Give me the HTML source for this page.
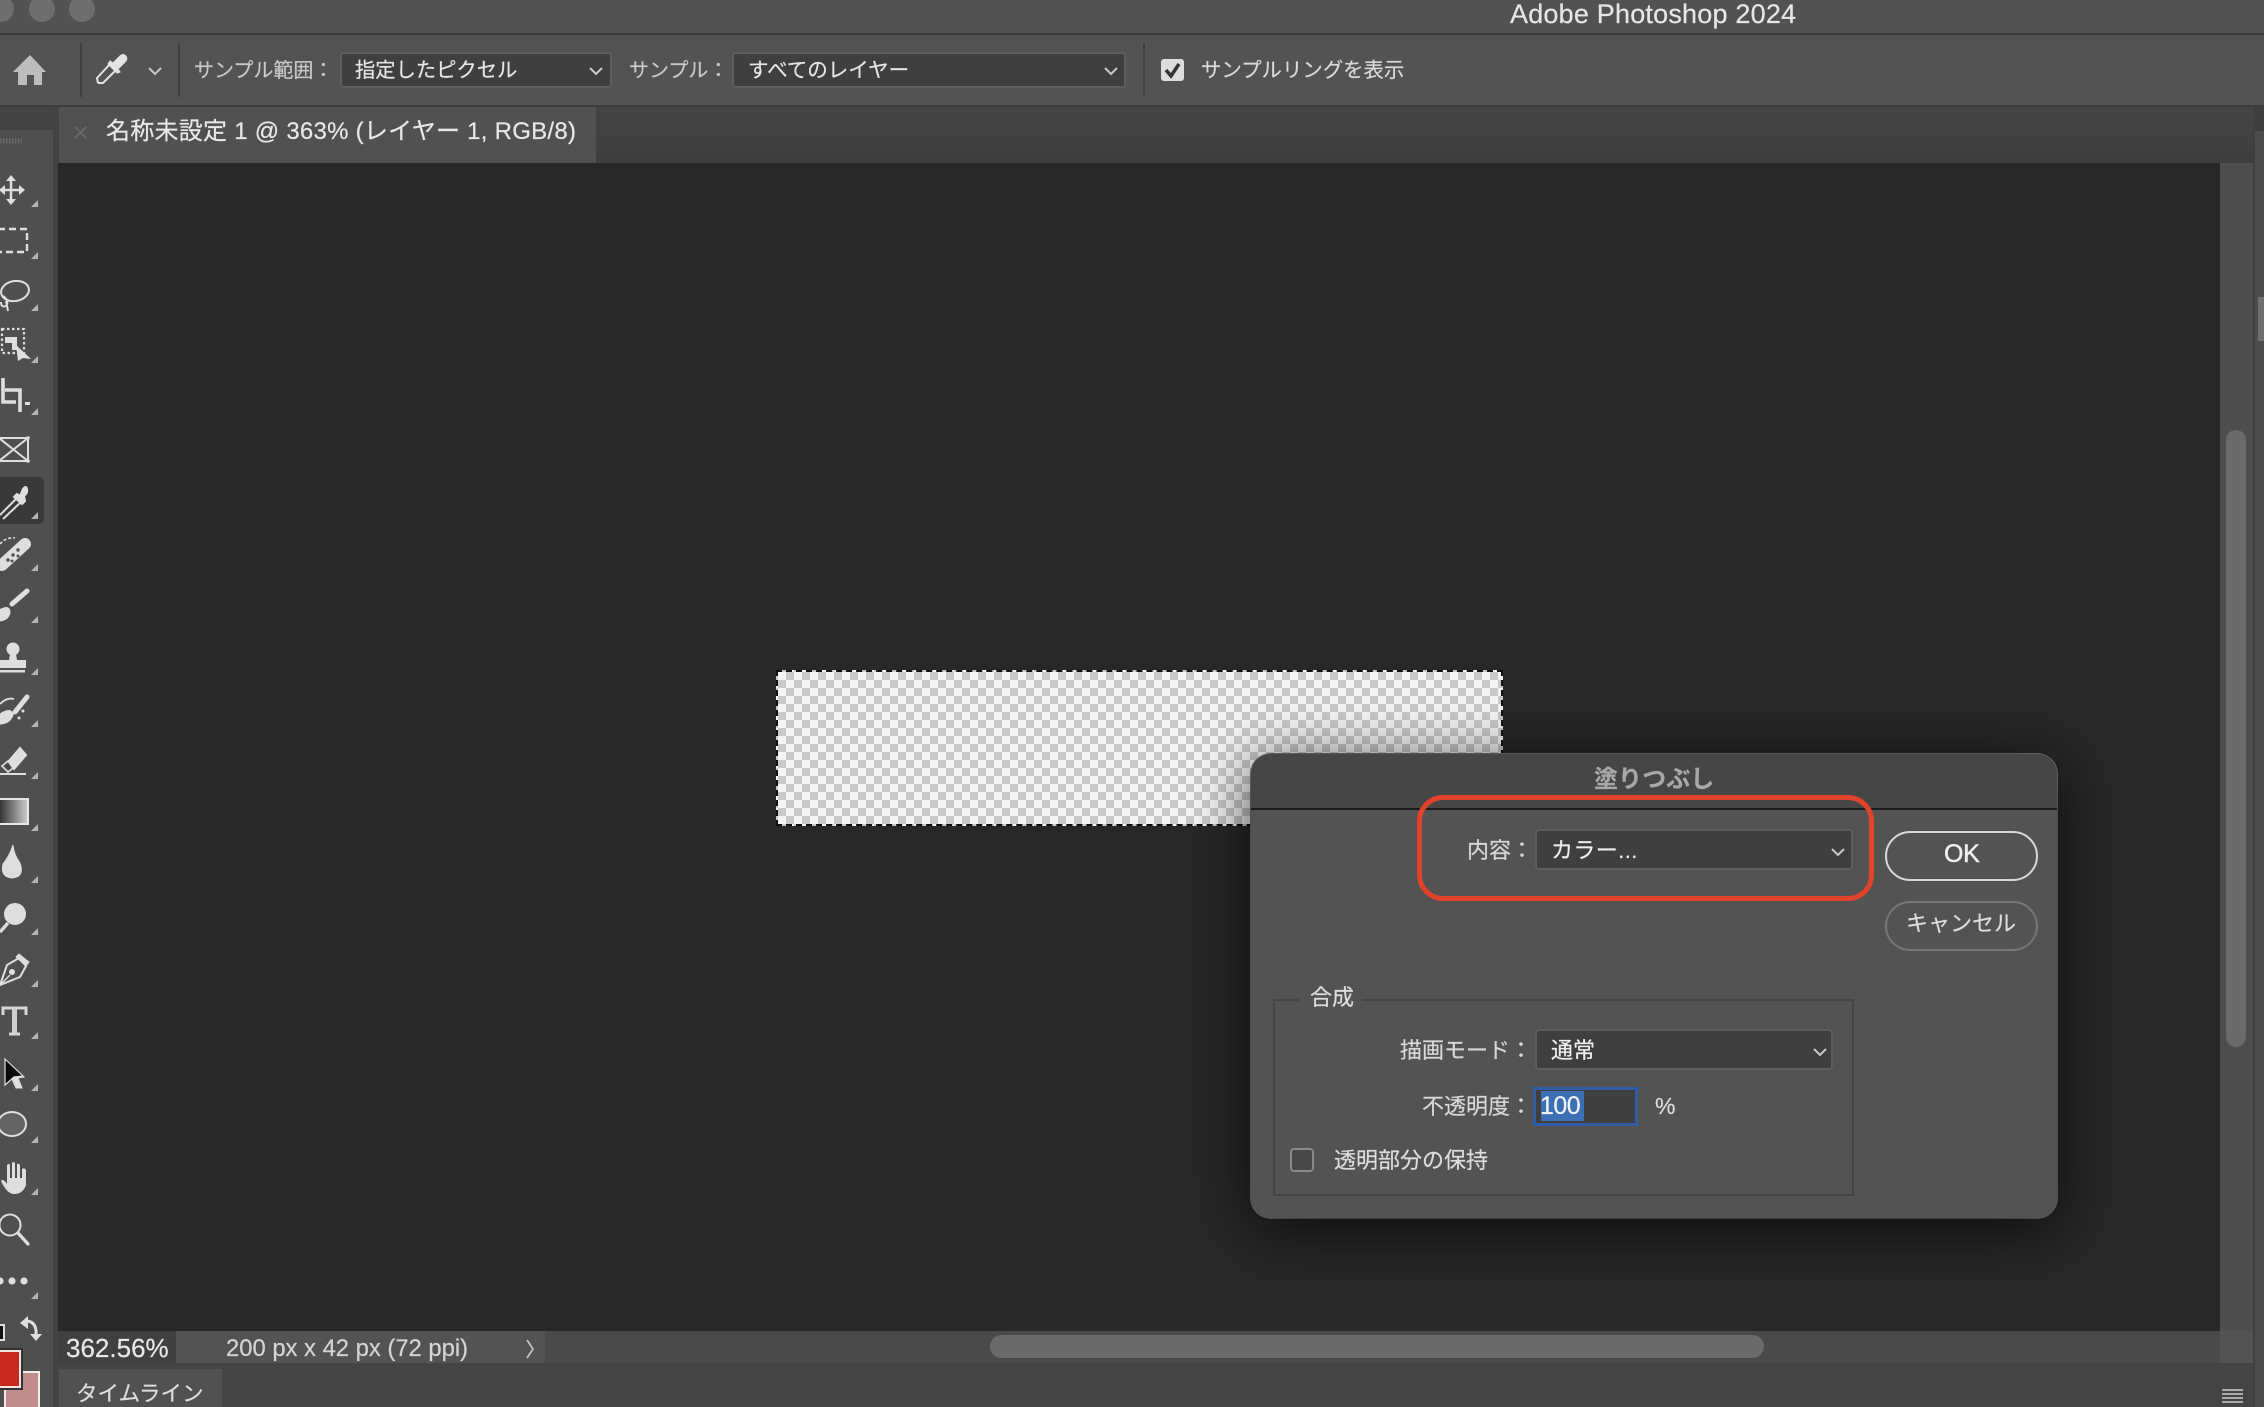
<!DOCTYPE html>
<html lang="ja"><head><meta charset="utf-8"><title>Adobe Photoshop 2024</title>
<style>
html,body{margin:0;padding:0;width:2264px;height:1407px;overflow:hidden;background:#282828}
body{position:relative;font-family:"Liberation Sans","Noto Sans CJK JP",sans-serif;color:#ddd}
.b{position:absolute;box-sizing:border-box}
.t{position:absolute;white-space:nowrap;line-height:1;color:#ddd;-webkit-text-stroke:.2px currentColor}
.sel{position:absolute;box-sizing:border-box;background:#3f3f3f;border:2px solid #5e5e5e;border-radius:4px}
svg{position:absolute;left:0;top:0}
</style></head><body>
<!-- chrome -->
<div class="b" style="left:0;top:0;width:2264px;height:33px;background:#525252"></div>
<div class="b" style="left:0;top:33px;width:2264px;height:2px;background:#393939"></div>
<div class="b" style="left:0;top:35px;width:2264px;height:70px;background:#535353"></div>
<div class="b" style="left:0;top:105px;width:2264px;height:2px;background:#3c3c3c"></div>
<div class="b" style="left:0;top:107px;width:2253px;height:56px;background:linear-gradient(#444,#3e3e3e)"></div>
<div class="b" style="left:59px;top:107px;width:537px;height:56px;background:#515151"></div>
<!-- canvas area -->
<div class="b" style="left:58px;top:163px;width:2162px;height:1168px;background:#282828"></div>
<div class="b" style="left:0;top:130px;width:53px;height:1277px;background:#4f4f4f"></div>
<div class="b" style="left:53px;top:107px;width:5px;height:1300px;background:#434343"></div>
<!-- document -->
<div class="b" style="left:776px;top:670px;width:727px;height:156px;background-color:#f4f4f4;background-image:conic-gradient(#c9c9c9 25%,#f4f4f4 0 50%,#c9c9c9 0 75%,#f4f4f4 0);background-size:16px 16px;border:2px dashed #111"></div>
<!-- scrollbars -->
<div class="b" style="left:2220px;top:163px;width:33px;height:1168px;background:#4e4e4e"></div>
<div class="b" style="left:2226px;top:430px;width:20px;height:617px;border-radius:10px;background:#6a6a6a"></div>
<div class="b" style="left:2253px;top:107px;width:11px;height:1300px;background:#4c4c4c;border-left:2px solid #3f3f3f"></div>
<div class="b" style="left:2255px;top:107px;width:9px;height:24px;background:#3d3d3d"></div>
<div class="b" style="left:2258px;top:297px;width:6px;height:44px;background:#6f6f6f"></div>
<div class="b" style="left:58px;top:1331px;width:2195px;height:32px;background:#4a4a4a"></div>
<div class="b" style="left:58px;top:1331px;width:118px;height:32px;background:#404040"></div>
<div class="b" style="left:176px;top:1331px;width:369px;height:32px;background:#535353"></div>
<div class="b" style="left:2220px;top:1331px;width:33px;height:32px;background:#535353"></div>
<div class="b" style="left:990px;top:1335px;width:774px;height:23px;border-radius:12px;background:#6a6a6a"></div>
<div class="b" style="left:58px;top:1363px;width:2195px;height:44px;background:#444"></div>
<div class="b" style="left:59px;top:1369px;width:163px;height:38px;background:#515151"></div>
<div class="b" style="left:0;top:477px;width:44px;height:47px;background:#393939;border-radius:0 5px 5px 0"></div>

<!-- option bar -->
<div class="sel" style="left:340px;top:52px;width:272px;height:36px"></div>
<div class="sel" style="left:732px;top:52px;width:394px;height:36px"></div>
<div class="b" style="left:1161px;top:59px;width:23px;height:22px;background:#ddd;border-radius:3px"></div>

<!-- texts -->
<span class="t" style="left:1510px;top:1px;font-size:27px;letter-spacing:.2px;color:#e6e6e6">Adobe Photoshop 2024</span>
<span class="t" style="left:194px;top:61px;font-size:20px;color:#c8c8c8">サンプル範囲：</span>
<span class="t" style="left:355px;top:61px;font-size:20.3px;color:#e6e6e6">指定したピクセル</span>
<span class="t" style="left:629px;top:61px;font-size:20px;color:#c8c8c8">サンプル：</span>
<span class="t" style="left:748px;top:61px;font-size:20.5px;color:#e6e6e6">すべてのレイヤー</span>
<span class="t" style="left:1201px;top:61px;font-size:20.4px;color:#d8d8d8">サンプルリングを表示</span>
<span class="t" style="left:106px;top:120px;font-size:24px;letter-spacing:.26px;color:#e8e8e8">名称未設定 1 @ 363% (レイヤー 1, RGB/8)</span>
<span class="t" style="left:66px;top:1335px;font-size:26px;color:#e8e8e8">362.56%</span>
<span class="t" style="left:226px;top:1337px;font-size:23.8px;color:#d4d4d4">200 px x 42 px (72 ppi)</span>
<span class="t" style="left:76px;top:1384px;font-size:21.5px;color:#ddd">タイムライン</span>

<!-- dialog -->
<div class="b" style="left:1251px;top:754px;width:806px;height:464px;border-radius:20px;background:#535353;box-shadow:0 10px 60px rgba(0,0,0,.75),0 0 0 1px #777;overflow:hidden">
  <div class="b" style="left:0;top:0;width:806px;height:56px;background:#464646;border-bottom:2px solid #1c1c1c"></div>
</div>
<span class="t" style="left:1594px;top:768px;font-size:24px;font-weight:700;color:#a8a8a8">塗りつぶし</span>
<span class="t" style="left:1467px;top:840px;font-size:22px;color:#d8d8d8">内容：</span>
<div class="sel" style="left:1535px;top:829px;width:318px;height:41px"></div>
<span class="t" style="left:1551px;top:840px;font-size:22px;letter-spacing:.4px;color:#eee">カラー...</span>
<div class="b" style="left:1885px;top:831px;width:153px;height:50px;border-radius:25px;border:2px solid #d8d8d8"></div>
<span class="t" style="left:1944px;top:842px;font-size:25px;letter-spacing:-.3px;-webkit-text-stroke:.5px #eee;color:#eee">OK</span>
<div class="b" style="left:1885px;top:901px;width:153px;height:50px;border-radius:25px;border:2px solid #767676"></div>
<span class="t" style="left:1906px;top:913px;font-size:22px;color:#ddd">キャンセル</span>
<div class="b" style="left:1417px;top:795px;width:457px;height:106px;border-radius:26px;border:5px solid #e0432a"></div>

<div class="b" style="left:1273px;top:999px;width:581px;height:197px;border:2px solid #454545"></div>
<div class="b" style="left:1299px;top:990px;width:63px;height:16px;background:#535353"></div>
<span class="t" style="left:1310px;top:987px;font-size:22px;color:#ddd">合成</span>
<span class="t" style="left:1400px;top:1040px;font-size:22px;color:#d8d8d8">描画モード：</span>
<div class="sel" style="left:1535px;top:1029px;width:298px;height:41px"></div>
<span class="t" style="left:1551px;top:1040px;font-size:22px;color:#eee">通常</span>
<span class="t" style="left:1422px;top:1096px;font-size:22px;color:#d8d8d8">不透明度：</span>
<div class="b" style="left:1533px;top:1087px;width:105px;height:39px;background:#3f3f3f;border:3px solid #2f5da8"></div>
<div class="b" style="left:1541px;top:1091px;width:43px;height:30px;background:#3d6fb5"></div>
<span class="t" style="left:1540px;top:1094px;font-size:25px;letter-spacing:-.5px;color:#f2f2f2">100</span>
<span class="t" style="left:1655px;top:1095px;font-size:23px;color:#ddd">%</span>
<div class="b" style="left:1290px;top:1148px;width:24px;height:24px;background:#484848;border:2px solid #8a8a8a;border-radius:4px"></div>
<span class="t" style="left:1334px;top:1150px;font-size:22px;color:#ddd">透明部分の保持</span>

<!-- icons -->
<svg width="2264" height="1407" viewBox="0 0 2264 1407" fill="none">
<!-- window dots -->
<g fill="#6e6e6e"><circle cx="1" cy="9" r="13"/><circle cx="42" cy="9" r="13"/><circle cx="82" cy="9" r="13"/></g>
<!-- separators -->
<g fill="#404040"><rect x="80" y="43" width="2" height="54"/><rect x="178" y="43" width="2" height="54"/><rect x="1143" y="43" width="2" height="54"/></g>
<!-- home -->
<path d="M30 55 L46 72 H42 V85 H34 V75 H27 V85 H18 V72 H13Z" fill="#bdbdbd"/>
<!-- option eyedropper -->
<path d="M98 83 L97 78 L111 63 M98 83 L103 83 L118 68" stroke="#e4e4e4" stroke-width="2"/>
<path d="M109 62 L115 68 M113 63 L120 56 Q123 53 126 56 Q128 59 125 62 L118 69 L120 72 L117 73 L108 64 L110 61Z" fill="#e4e4e4" stroke="#e4e4e4" stroke-width="1"/>
<!-- chevrons -->
<g stroke="#c9c9c9" stroke-width="2">
<path d="M149 68 L155 74 L161 68"/><path d="M590 68 L596 74 L602 68"/><path d="M1105 68 L1111 74 L1117 68"/>
<path d="M1832 849 L1838 855 L1844 849"/><path d="M1814 1049 L1820 1055 L1826 1049"/>
<path d="M527 1340 L533 1349 L527 1358" stroke-width="1.6"/>
</g>
<!-- check -->
<path d="M1166 70 L1171 76 L1179 64" stroke="#333" stroke-width="3.5"/>
<!-- tab x -->
<path d="M75 127 L86 138 M86 127 L75 138" stroke="#707070" stroke-width="1.3"/>
<!-- toolbar grip -->
<path d="M0 141 H22" stroke="#6b6b6b" stroke-width="5" stroke-dasharray="1.5 1.5"/>
<!-- tool corner triangles -->
<g fill="#b4b4b4">
<path d="M31 207h7v-7z"/><path d="M31 259h7v-7z"/><path d="M31 311h7v-7z"/><path d="M31 363h7v-7z"/><path d="M31 415h7v-7z"/><path d="M31 519h7v-7z"/><path d="M31 571h7v-7z"/><path d="M31 623h7v-7z"/><path d="M31 675h7v-7z"/><path d="M31 727h7v-7z"/><path d="M31 779h7v-7z"/><path d="M31 831h7v-7z"/><path d="M31 883h7v-7z"/><path d="M31 935h7v-7z"/><path d="M31 987h7v-7z"/><path d="M31 1039h7v-7z"/><path d="M31 1091h7v-7z"/><path d="M31 1143h7v-7z"/><path d="M31 1195h7v-7z"/><path d="M31 1299h7v-7z"/>
</g>
<g fill="#dedede" stroke="#dedede">
<!-- move -->
<path d="M11 178 V202 M1 190 H23" stroke-width="2.5"/>
<path d="M11 175 L6 181 H16Z M11 205 L6 199 H16Z M25 190 L19 185 V195Z M-1 190 L5 185 V195Z" stroke="none"/>
<!-- marquee -->
<path d="M-2 229 H27 V252 H-2" fill="none" stroke-width="2.4" stroke-dasharray="7 4"/>
<!-- lasso -->
<ellipse cx="15" cy="291" rx="14" ry="10" transform="rotate(-10 15 291)" fill="none" stroke-width="2"/>
<path d="M3 296 Q10 301 6 306 Q1 308 1 302 M6 301 L8 311" fill="none" stroke-width="2"/>
<!-- object select -->
<rect x="2" y="329" width="22" height="24" fill="none" stroke-width="2.2" stroke-dasharray="2.5 2.5"/>
<path d="M5 337 H17 V350 H12 V343 H5Z" stroke="none"/>
<path d="M16 345 L31 359 L23 358 L18 361Z" stroke="none"/>
<!-- crop -->
<path d="M3 378 V402 H16 M5 390 H20 V412" fill="none" stroke-width="3.6"/>
<rect x="25" y="402" width="5" height="3" stroke="none"/>
<!-- frame -->
<path d="M-1 438 H28 V461 H-1 M-1 438 L28 461 M28 438 L-1 461" fill="none" stroke-width="2"/>
<circle cx="28" cy="438" r="1.8" stroke="none"/><circle cx="28" cy="461" r="1.8" stroke="none"/>
<!-- eyedropper -->
<path d="M0 515 L16 499 M3 519 L20 503" fill="none" stroke-width="2"/>
<path d="M14 497 L17 494 L20 496 L23 489 Q26 485 27 489 Q28 493 24 496 L25 501 L22 504Z" stroke-width="2"/>
<!-- heal -->
<path d="M2 565 L25 544" fill="none" stroke-width="12" stroke-linecap="round"/>
<path d="M0 544 Q6 537 15 538" fill="none" stroke-width="1.6" stroke-dasharray="3 2"/>
<g fill="#4f4f4f" stroke="none"><circle cx="8" cy="560" r="1.7"/><circle cx="13" cy="555" r="1.7"/><circle cx="18" cy="550" r="1.7"/><circle cx="12" cy="561" r="1.5"/><circle cx="18" cy="556" r="1.5"/></g>
<!-- brush -->
<path d="M27 591 L12 604" stroke-width="5" stroke-linecap="round"/>
<path d="M-2 621 Q8 621 10 613 Q10 606 4 608 Q-2 610 -2 612Z" stroke-width="1"/>
<!-- stamp -->
<circle cx="13" cy="649" r="6" stroke-width="1"/>
<path d="M10 654 H16 L17 660 H26 V668 H-1 V660 H9Z" stroke="none"/>
<rect x="-1" y="670" width="26" height="2.5" stroke="none"/>
<!-- history -->
<path d="M27 697 L15 712" stroke-width="5" stroke-linecap="round"/>
<path d="M-1 724 Q10 724 13 715 Q12 709 6 711 Q0 713 -1 716Z" stroke-width="1"/>
<path d="M0 704 Q7 697 14 699" fill="none" stroke-width="1.8"/>
<circle cx="23" cy="711" r="1.5" stroke="none"/><circle cx="19" cy="718" r="1.5" stroke="none"/>
<!-- eraser -->
<path d="M20 748 L26 755 L14 769 L8 762Z" stroke-width="2"/>
<path d="M2 766 L8 761 L13 768 L8 772Z" fill="#4a4a4a" stroke="#dedede" stroke-width="1.6"/>
<path d="M0 774 H26" stroke-width="2"/>
<!-- drop -->
<path d="M13 845 Q14 855 20 863 Q25 877 12 878 Q0 877 3 864 Q10 855 13 845Z" stroke-width="1"/>
<!-- dodge -->
<circle cx="15" cy="914" r="10" stroke-width="2"/>
<path d="M0 932 L8 923" stroke-width="3.4"/>
<!-- pen -->
<path d="M0 985 L7 965 L19 958 L26 966 L20 977Z" fill="none" stroke-width="2"/>
<path d="M19 954 L25 959 L29 962 L26 966 L16 957Z" stroke-width="1"/>
<path d="M0 985 L10 975" stroke-width="1.5"/><circle cx="12" cy="972" r="3" stroke="none"/>
<!-- T tool -->
<path d="M3 1015 V1008 H26 V1015 M14.500 1008 V1034 M9 1034 H20" fill="none" stroke="#d6d6d6" stroke-width="3"/>
<path d="M12 1009 H17 V1033 H12Z" fill="#d0d0d0" stroke="none"/>
<!-- pointer tool -->
<path d="M14 1070 L24 1077 L18 1078 L22 1088 L16 1088 L12 1079Z" stroke-width="1"/>
<path d="M5 1059 L23 1076 L14 1077 L5 1085Z" fill="#0b0b0b" stroke="#ddd" stroke-width="1.2"/>
<!-- ellipse -->
<ellipse cx="12" cy="1124" rx="14" ry="12" fill="#636363" stroke-width="2"/>
<!-- hand -->
<path d="M1 1181 Q3 1178 7 1184 V1166 Q7 1164 9 1164 Q10 1164 10 1166 V1178 H12 V1163 Q13 1161 15 1163 V1178 H17 V1164 Q18 1163 20 1165 V1178 H22 V1169 Q24 1167 26 1170 V1185 Q23 1194 14 1194 Q7 1194 1 1181Z" stroke="none"/>
<!-- zoom -->
<circle cx="10" cy="1225" r="10.5" fill="none" stroke-width="2"/>
<path d="M18 1233 L28 1244" stroke-width="3.2" stroke-linecap="round"/>
<!-- dots -->
<circle cx="0" cy="1281" r="3.6" stroke="none"/><circle cx="12" cy="1281" r="3.6" stroke="none"/><circle cx="24" cy="1281" r="3.6" stroke="none"/>
<!-- swap -->
<path d="M27 1321 Q37 1322 36 1335" fill="none" stroke-width="3"/>
<path d="M20 1323 L28 1316 L28 1329Z M30 1334 L42 1334 L36 1341Z" stroke="none"/>
</g>
<!-- default colors -->
<rect x="-3" y="1325" width="7" height="15" fill="#111" stroke="#ddd" stroke-width="2"/>
<rect x="5" y="1372" width="34" height="40" fill="#c08c8c" stroke="#eee" stroke-width="2"/>
<rect x="-4" y="1351" width="24" height="36" fill="#c8291f" stroke="#f0e4e0" stroke-width="2"/>
<rect x="-6" y="1349" width="28" height="40" fill="none" stroke="#333" stroke-width="2"/>
<!-- panel menu -->
<g fill="#aaa"><rect x="2222" y="1389" width="21" height="2"/><rect x="2222" y="1393" width="21" height="2"/><rect x="2222" y="1397" width="21" height="2"/><rect x="2222" y="1401" width="21" height="2"/></g>
<!-- gradient tool -->
<defs><linearGradient id="g"><stop offset="0" stop-color="#2a2a2a"/><stop offset="1" stop-color="#cfcfcf"/></linearGradient></defs>
<rect x="-2" y="799" width="30" height="25" fill="url(#g)" stroke="#e6e6e6" stroke-width="2"/>
</svg>
</body></html>
